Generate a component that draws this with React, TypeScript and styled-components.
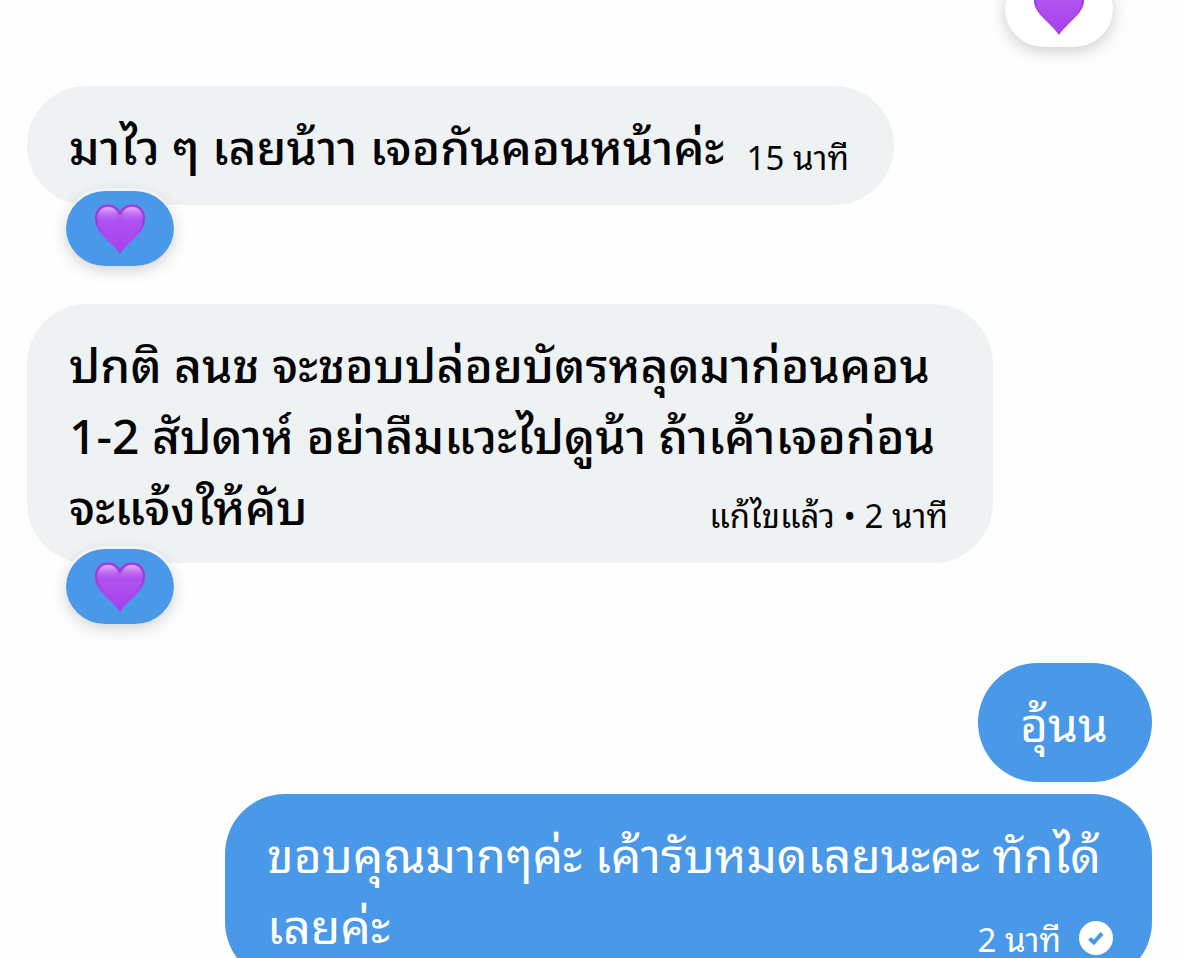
import React from 'react';
import styled, { createGlobalStyle, css } from 'styled-components';

const GlobalStyle = createGlobalStyle`
  * { box-sizing: border-box; }
  body {
    margin: 0;
    background: #fefefe;
    font-family: "Noto Sans Thai Looped", Loma, Garuda, Waree, Inter, "Noto Sans", sans-serif;
  }
`;

const Conversation = styled.main`
  display: flex;
  flex-direction: column;
  height: 100vh;
  padding: 0 27px;
  overflow: hidden;
`;

const PreviousMessage = styled.div`
  display: flex;
  flex: none;
  align-items: flex-end;
  justify-content: flex-end;
  height: 47px;
  padding-right: 39px;
`;

const Message = styled.article<{ $sent?: boolean; $gap: number; $gutter?: number }>`
  position: relative;
  display: flex;
  flex: none;
  flex-direction: column;
  align-self: ${(p) => (p.$sent ? 'flex-end' : 'flex-start')};
  min-width: ${(p) => (p.$gutter ? `calc(100% - ${p.$gutter}px)` : '174px')};
  max-width: 100%;
  min-height: 119px;
  margin-top: ${(p) => p.$gap}px;
  padding: ${(p) => (p.$sent ? '22px 39px 24px 42px' : '22px 45px 24px 42px')};
  border-radius: 60px;
  color: ${(p) => (p.$sent ? '#ffffff' : '#050505')};
  font-weight: ${(p) => (p.$sent ? 400 : 500)};
  background: ${(p) => (p.$sent ? '#4a99e9' : '#eef2f3')};
`;

const Line = styled.p`
  margin: 0;
  font-size: 48px;
  line-height: 71px;
  white-space: nowrap;
`;

const LastLine = styled.div`
  display: flex;
  flex: 1;
  justify-content: space-between;
  gap: 18px;
`;

const Meta = styled.div<{ $sent?: boolean }>`
  display: flex;
  align-items: center;
  align-self: flex-end;
  gap: 18px;
  margin-bottom: ${(p) => (p.$sent ? -3 : 2)}px;
  font-size: 33px;
  font-weight: 400;
  line-height: 46px;
  white-space: nowrap;
`;

const Reaction = styled.button<{ $light?: boolean }>`
  display: flex;
  flex: none;
  align-items: center;
  justify-content: center;
  width: 108px;
  height: 75px;
  padding: 0 1px 0 0;
  border: 0;
  border-radius: 40px / 38px;
  background: ${(p) => (p.$light ? '#ffffff' : '#4a99e9')};
  box-shadow: 0 4px 16px rgba(0, 0, 0, 0.2);
  ${(p) =>
    !p.$light &&
    css`
      position: absolute;
      left: 39px;
      bottom: -61px;
      box-shadow: 0 -2px 0 1px rgba(255, 255, 255, 0.5), 0 4px 16px rgba(0, 0, 0, 0.18);
    `}
`;

function Heart() {
  return (
    <svg width="52" height="52" viewBox="0 0 52 52" aria-hidden="true">
      <defs>
        <linearGradient id="heart-fill" x1="0" y1="0" x2="0" y2="1">
          <stop offset="0" stopColor="#b763ee" />
          <stop offset="0.35" stopColor="#ae52ef" />
          <stop offset="1" stopColor="#a540ea" />
        </linearGradient>
        <linearGradient id="heart-shine" gradientUnits="userSpaceOnUse" x1="0" y1="3" x2="0" y2="17">
          <stop offset="0" stopColor="#f0c4ff" stopOpacity="0.9" />
          <stop offset="1" stopColor="#c77af5" stopOpacity="0" />
        </linearGradient>
        <linearGradient id="heart-rim" gradientUnits="userSpaceOnUse" x1="0" y1="2" x2="0" y2="36">
          <stop offset="0" stopColor="#9d38dc" />
          <stop offset="0.5" stopColor="#9d38dc" />
          <stop offset="1" stopColor="#a540ea" stopOpacity="0" />
        </linearGradient>
      </defs>
      <path
        d="M26 11C23.500 4 18.500 1.500 14 1.500C6.500 1.500 1 7 1 15.500C1 30 16 37 26 51C36 37 51 30 51 15.500C51 7 45.500 1.500 38 1.500C33.500 1.500 28.500 4 26 11Z"
        fill="url(#heart-fill)"
      />
      <path
        d="M26 11C23.500 4 18.500 2.500 14 2.500C6.500 2.500 2 8 2 15.500C2 24 7 29 12.500 34.500M26 11C28.500 4 33.500 2.500 38 2.500C45.500 2.500 50 8 50 15.500C50 24 45 29 39.500 34.500"
        fill="none"
        stroke="url(#heart-rim)"
        strokeWidth="2"
      />
      <path d="M4 18C3 8 8 4 14 4C20 4 24 8 25 18Z" fill="url(#heart-shine)" />
      <path d="M48 18C49 8 44 4 38 4C32 4 28 8 27 18Z" fill="url(#heart-shine)" />
    </svg>
  );
}

function DeliveredIcon() {
  return (
    <svg width="34" height="34" viewBox="0 0 34 34" role="img" aria-label="ส่งแล้ว">
      <circle cx="17" cy="17" r="17" fill="#fff" />
      <path d="M10.500 17.500L14.800 21.500L23 12.300" fill="none" stroke="#4a99e9" strokeWidth="4" />
    </svg>
  );
}

type BubbleProps = {
  lines: string[];
  meta?: React.ReactNode;
  sent?: boolean;
  gap: number;
  gutter?: number;
  reaction?: boolean;
};

function Bubble({ lines, meta, sent, gap, gutter, reaction }: BubbleProps) {
  const last = lines[lines.length - 1];
  return (
    <Message $sent={sent} $gap={gap} $gutter={gutter}>
      {lines.slice(0, -1).map((line) => (
        <Line key={line}>{line}</Line>
      ))}
      <LastLine>
        <Line>{last}</Line>
        {meta && <Meta $sent={sent}>{meta}</Meta>}
      </LastLine>
      {reaction && (
        <Reaction type="button" aria-label="หัวใจสีม่วง">
          <Heart />
        </Reaction>
      )}
    </Message>
  );
}

export default function App() {
  return (
    <>
      <GlobalStyle />
      <Conversation>
        <PreviousMessage>
          <Reaction type="button" $light aria-label="หัวใจสีม่วง">
            <Heart />
          </Reaction>
        </PreviousMessage>
        <Bubble gap={39} gutter={258} lines={['มาไว ๆ เลยน้าา เจอกันคอนหน้าค่ะ']} meta="15 นาที" reaction />
        <Bubble
          gap={99}
          gutter={159}
          lines={[
            'ปกติ ลนช จะชอบปล่อยบัตรหลุดมาก่อนคอน',
            '1-2 สัปดาห์ อย่าลืมแวะไปดูน้า ถ้าเค้าเจอก่อน',
            'จะแจ้งให้คับ',
          ]}
          meta="แก้ไขแล้ว • 2 นาที"
          reaction
        />
        <Bubble sent gap={100} lines={['อุ้นน']} />
        <Bubble
          sent
          gap={12}
          gutter={198}
          lines={['ขอบคุณมากๆค่ะ เค้ารับหมดเลยนะคะ ทักได้', 'เลยค่ะ']}
          meta={
            <>
              2 นาที
              <DeliveredIcon />
            </>
          }
        />
      </Conversation>
    </>
  );
}
